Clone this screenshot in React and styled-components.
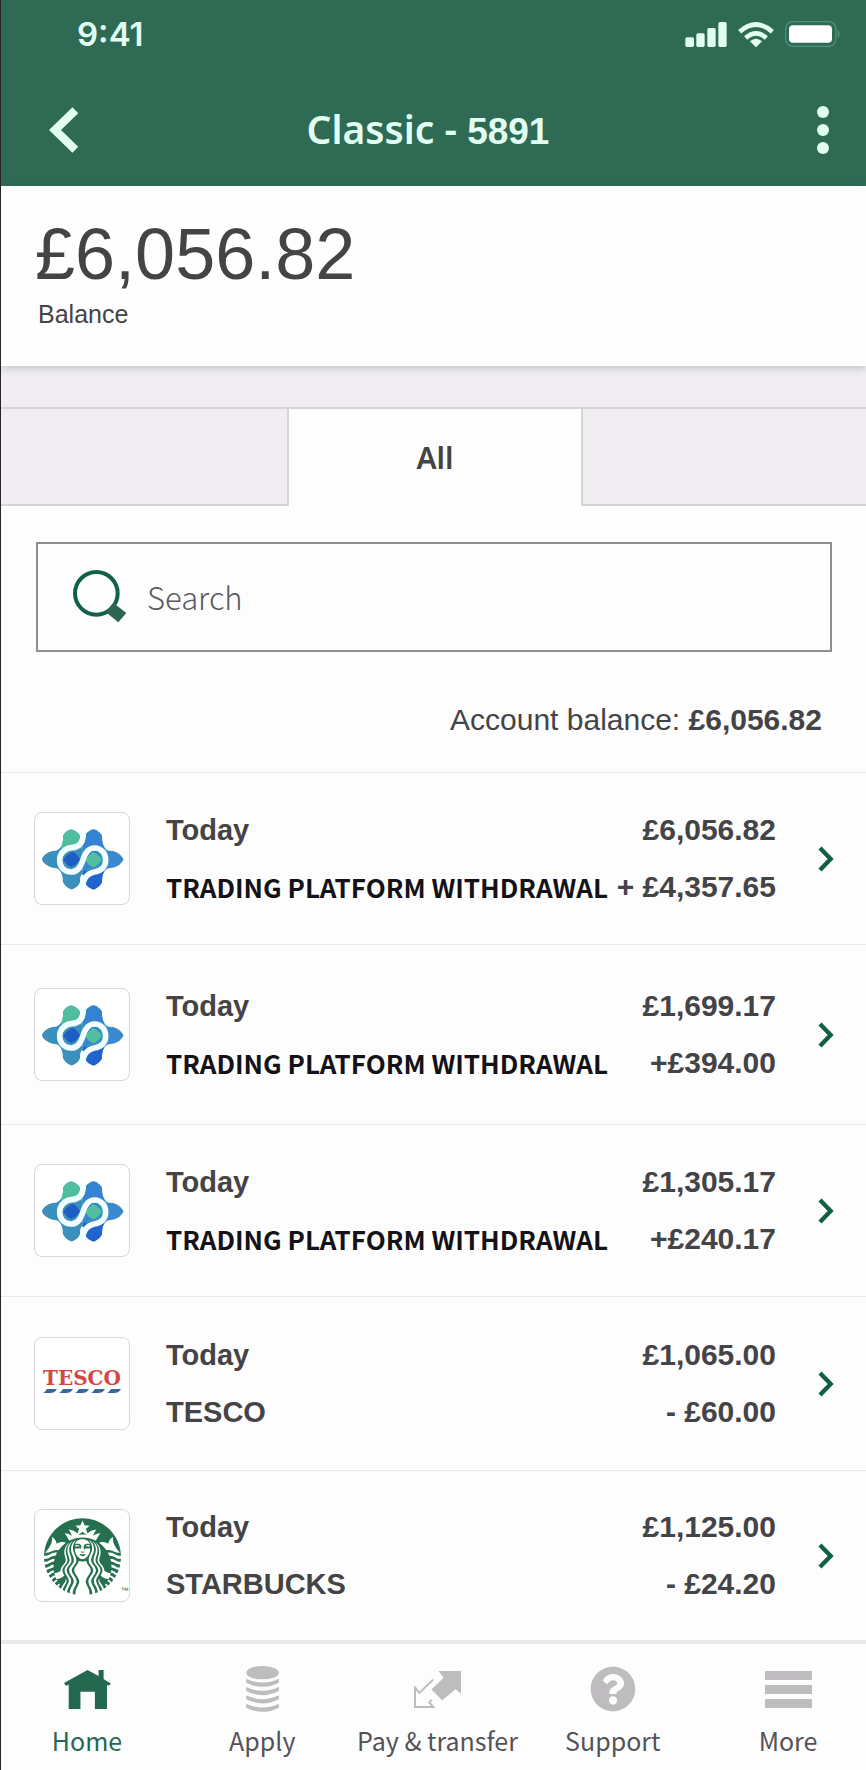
import React, { useState } from 'react';
import styled, { createGlobalStyle } from 'styled-components';
import { FaQuestionCircle } from 'react-icons/fa';
import { SiStarbucks } from 'react-icons/si';

const GlobalStyle = createGlobalStyle`
	:root {
		--green: #2f6a54;
		--darkGreen: #0f5f48;
		--mint: #e2fff3;
		--text: #444346;
		--line: #ebe9ec;
		--panel: #f0eef1;
		--humanist: 'Noto Sans CJK SC', 'Noto Sans', sans-serif;
	}
	* {
		box-sizing: border-box;
	}
	body {
		margin: 0;
		background: #fdfdfe;
		color: var(--text);
		font-family: 'Liberation Sans', Arial, sans-serif;
	}
	button {
		border: none;
		padding: 0;
		background: none;
		color: inherit;
		font-family: inherit;
		cursor: pointer;
	}
	svg {
		display: block;
		flex: none;
	}
`

const Page = styled.div`
	display: flex;
	flex-direction: column;
	min-height: 100vh;
	border-left: 1px solid #26242a;
`

const Header = styled.header`
	padding: 16px 24px 24px 48px;
	background: var(--green);
	color: var(--mint);
`

const StatusBar = styled.div`
	display: flex;
	align-items: center;
	justify-content: space-between;
	height: 36px;
	padding-left: 28px;
`

const Time = styled.span`
	font: 600 33px/36px Inter, sans-serif;
`

const StatusIcons = styled.div`
	display: flex;
	align-items: center;
	gap: 11px;
`

const TitleBar = styled.div`
	display: flex;
	align-items: center;
	margin-top: 46px;
	height: 64px;
	padding-right: 13px;
`

const Title = styled.h1`
	flex: 1;
	margin: 0;
	padding-right: 40px;
	text-align: center;
	font: 600 39px/64px 'Noto Sans', sans-serif;
`

const AccountNumber = styled.span`
	font: 700 37px/64px 'Liberation Sans', Arial, sans-serif;
`

const BalancePanel = styled.section`
	position: relative;
	padding: 28px 34px 36px;
	background: #fefefe;
	box-shadow: 0 2px 8px rgba(60, 55, 65, .25);
`

const BigAmount = styled.p`
	margin: 0;
	font-size: 72px;
	line-height: 80px;
	color: #424446;
`

const BalanceLabel = styled.p`
	margin: 4px 0 0 3px;
	font-size: 25px;
	line-height: 32px;
`

const Tabs = styled.div`
	display: grid;
	grid-template-columns: 288fr 292fr 285fr;
	padding-top: 41px;
	background: var(--panel);
`

const Tab = styled.button`
	height: 99px;
	padding-top: 2px;
	border-top: 2px solid #d6d4d8;
	border-bottom: 2px solid ${props => props.$active ? '#fdfdfe' : '#d6d4d8'};
	border-left: ${props => props.$after ? '2px solid #d6d4d8' : 'none'};
	border-right: ${props => props.$before ? '2px solid #d6d4d8' : 'none'};
	background: ${props => props.$active ? '#fdfdfe' : 'var(--panel)'};
	font: 600 30px/40px 'Noto Sans', sans-serif;
`

const SearchBox = styled.label`
	display: flex;
	align-items: center;
	gap: 20px;
	height: 110px;
	margin: 36px 34px 0 35px;
	padding: 0 34px 0 35px;
	border: 2px solid #918d92;
`

const SearchInput = styled.input`
	flex: 1;
	min-width: 0;
	padding: 0;
	border: none;
	outline: none;
	background: none;
	color: var(--text);
	font: 300 31px/44px var(--humanist);
	&::placeholder {
		color: #5c585e;
		opacity: 1;
	}
`

const AccountBalance = styled.p`
	margin: 0;
	padding: 50px 44px 34px;
	text-align: right;
	font-size: 30px;
	line-height: 36px;
`

const Transactions = styled.ul`
	margin: 0;
	padding: 0;
	list-style: none;
`

const Transaction = styled.a`
	display: flex;
	align-items: center;
	padding: ${props => props.$pad}px 32px ${props => props.$pad}px 33px;
	border-top: 1px solid var(--line);
	color: var(--text);
	text-decoration: none;
`

const LogoFrame = styled.div`
	flex: none;
	width: 96px;
	height: 93px;
	margin-right: 36px;
	border: 1px solid #d9d6db;
	border-radius: 8px;
	background: #fff;
`

const Lines = styled.div`
	display: flex;
	flex-direction: column;
	gap: 21px;
	flex: ${props => props.$amounts ? 'none' : 1};
	align-items: ${props => props.$amounts ? 'flex-end' : 'flex-start'};
	margin-right: ${props => props.$amounts ? 42 : 0}px;
	font-size: ${props => props.$amounts ? 30 : 29}px;
	font-weight: 700;
	line-height: 36px;
	white-space: nowrap;
`

const Platform = styled.span`
	color: #141216;
	font-family: var(--humanist);
	font-size: 26px;
`

const BottomNav = styled.nav`
	display: flex;
	justify-content: space-between;
	margin-top: auto;
	padding: 22px 8px 10px 16px;
	border-top: 4px solid #eae8eb;
`

const NavItem = styled.a`
	display: flex;
	flex-direction: column;
	align-items: center;
	width: 140px;
	color: ${props => props.$active ? '#24694f' : '#bfbcc0'};
	text-decoration: none;
`

const NavIcon = styled.span`
	display: flex;
	align-items: center;
	height: 46px;
`

const NavLabel = styled.span`
	margin-top: 8px;
	color: ${props => props.$active ? '#24694f' : '#555257'};
	font: 400 25px/40px var(--humanist);
	white-space: nowrap;
`

const SignalIcon = () => (
	<svg width="42" height="25" viewBox="0 0 124 75" fill="currentColor">
		<rect x="0" y="46" width="26" height="29" rx="5" />
		<rect x="33" y="34" width="25" height="41" rx="5" />
		<rect x="66" y="18" width="25" height="57" rx="5" />
		<rect x="99" y="0" width="25" height="75" rx="5" />
	</svg>
)

const WifiIcon = () => (
	<svg width="36" height="25" viewBox="0 0 108 75">
		<g fill="none" stroke="currentColor" strokeWidth="14">
			<path d="M5 29 Q54 -14 103 29" />
			<path d="M23 48 Q54 20 85 48" />
		</g>
		<path fill="currentColor" d="M36 58 Q54 43 72 58 L54 76z" />
	</svg>
)

const BatteryIcon = () => (
	<svg width="57" height="26" viewBox="0 0 171 78">
		<rect x="2" y="2" width="151" height="74" rx="22" fill="none" stroke="#4d9277" strokeWidth="4" />
		<rect x="12" y="13" width="129" height="52" rx="12" fill="#fff" />
		<path d="M158 27 Q171 39 158 51z" fill="#4d9277" />
	</svg>
)

const BackIcon = () => (
	<svg width="30" height="48" viewBox="0 0 90 144">
		<path d="M79 13 L18 72 L79 131" fill="none" stroke="currentColor" strokeWidth="25" />
	</svg>
)

const DotsIcon = () => (
	<svg width="12" height="48" viewBox="0 0 12 48" fill="currentColor">
		<circle cx="6" cy="6" r="6" />
		<circle cx="6" cy="24" r="6" />
		<circle cx="6" cy="42" r="6" />
	</svg>
)

const SearchIcon = () => (
	<svg width="54" height="54" viewBox="0 0 162 162">
		<circle cx="70" cy="70" r="64" fill="none" stroke="#11604a" strokeWidth="12" />
		<path d="M121 98 L160 129 L136 157 L98 126z" fill="#2c6650" />
	</svg>
)

const Chevron = () => (
	<svg width="16" height="26" viewBox="0 0 48 78">
		<path d="M6 6 L38 39 L6 72" fill="none" stroke="#0f5f48" strokeWidth="13" />
	</svg>
)

// six petals cut by a white S-shaped ribbon
const PlatformLogo = ({ id }) => (
	<svg width="94" height="91" viewBox="0 0 282 273">
		<clipPath id={id}>
			<path d="M108 49 Q116 50 128 59 Q138 67 135 80 Q134 94 142 94 Q151 94 149 78 Q146 66 158 58 Q170 49 177 49 Q192 54 201 68 Q200 98 214 110 Q222 115 234 114 Q256 120 266 139 Q256 160 234 164 Q222 163 212 170 Q200 182 201 208 Q194 222 177 230 Q158 226 149 208 Q149 184 142 184 Q135 184 135 208 Q128 224 110 230 Q92 224 84 208 Q84 182 72 170 Q64 163 52 164 Q28 158 20 139 Q28 120 52 114 Q64 115 72 108 Q86 98 84 68 Q92 54 108 49z" />
		</clipPath>
		<g clipPath={'url(#' + id + ')'}>
			<rect width="143" height="273" fill="#3a90bb" />
			<rect x="143" width="139" height="273" fill="#3a88cd" />
			<path d="M60 40 H143 V106 H76z" fill="#50bd9f" />
			<path d="M143 40 H210 V112 L143 130z" fill="#3581d2" />
			<path d="M143 174 H210 V240 H143z" fill="#2164ce" />
		</g>
		<path d="M112 116 Q128 122 135 140 Q122 156 110 162 Q96 158 85 140 Q96 122 112 116z" fill="#1e5dc4" />
		<path d="M175 118 Q190 124 201 140 Q190 157 175 163 Q160 158 152 142 Q162 122 175 118z" fill="#52c09c" />
		<path
			d="M145 52 C147 92 130 103 110 104 C88 106 74 122 74 141 C74 162 88 177 108 177 C130 177 138 158 144 141 C150 120 158 105 178 105 C198 105 212 120 212 141 C212 162 198 174 178 177 C156 181 142 196 142 232"
			fill="none" stroke="#f2ffff" strokeWidth="17"
		/>
	</svg>
)

const TescoLogo = () => (
	<svg width="94" height="91" viewBox="0 0 94 91">
		<text x="47" y="47" textAnchor="middle" fill="#d34845" fontFamily="DejaVu Serif, serif" fontWeight="700" fontSize="20">TESCO</text>
		<g fill="#38699c">
			{[0, 1, 2, 3, 4].map(i => (
				<path key={i} d="M12 51 H22 Q20 55 15 55 H8 Q10 54 12 51z" transform={'translate(' + (i * 16) + ' 0)'} />
			))}
		</g>
	</svg>
)

const CoffeeFrame = styled.div`
	display: flex;
	align-items: flex-end;
	justify-content: center;
	height: 91px;
	padding: 0 0 6px 8px;
	color: #25704f;
	font-size: 8px;
	line-height: 8px;
`

const CoffeeLogo = () => (
	<CoffeeFrame><SiStarbucks size={77} />™</CoffeeFrame>
)

const HomeIcon = () => (
	<svg width="47" height="39" viewBox="0 0 140 116" fill="currentColor">
		<path d="M0 39 L70 0 L103 18 V0 H118 V27 L140 41 L133 47 L128 44 V116 H92 V65 H49 V116 H14 V44 L6 47z" />
	</svg>
)

const CoinsIcon = () => (
	<svg width="33" height="46" viewBox="0 0 98 138" fill="currentColor">
		<ellipse cx="49" cy="20" rx="49" ry="20" />
		{[38, 63, 88, 113].map(y => (
			<path key={y} d={'M0 ' + y + ' Q49 ' + (y + 23) + ' 98 ' + y + ' V' + (y + 12) + ' Q49 ' + (y + 37) + ' 0 ' + (y + 12) + 'z'} />
		))}
	</svg>
)

const TransferIcon = () => (
	<svg width="47" height="37" viewBox="0 0 140 110">
		<path d="M73 0 H140 V68 L124 54 L84 87 L52 55 L88 20z" fill="currentColor" />
		<path d="M57 25 L16 65 L3 50 V107 H58 L46 94 L52 86" fill="none" stroke="currentColor" strokeWidth="6" />
	</svg>
)

const BarsIcon = () => (
	<svg width="47" height="37" viewBox="0 0 47 37" fill="currentColor">
		<rect width="47" height="9" />
		<rect y="14" width="47" height="9" />
		<rect y="28" width="47" height="9" />
	</svg>
)

const transactions = [
	{ logo: PlatformLogo, name: 'TRADING PLATFORM WITHDRAWAL', platform: true, balance: '£6,056.82', amount: '+ £4,357.65', pad: 39 },
	{ logo: PlatformLogo, name: 'TRADING PLATFORM WITHDRAWAL', platform: true, balance: '£1,699.17', amount: '+£394.00', pad: 43 },
	{ logo: PlatformLogo, name: 'TRADING PLATFORM WITHDRAWAL', platform: true, balance: '£1,305.17', amount: '+£240.17', pad: 39 },
	{ logo: TescoLogo, name: 'TESCO', balance: '£1,065.00', amount: '- £60.00', pad: 40 },
	{ logo: CoffeeLogo, name: 'STARBUCKS', balance: '£1,125.00', amount: '- £24.20', pad: 38 },
]

const navItems = [
	{ label: 'Home', icon: <HomeIcon />, active: true },
	{ label: 'Apply', icon: <CoinsIcon /> },
	{ label: 'Pay & transfer', icon: <TransferIcon /> },
	{ label: 'Support', icon: <FaQuestionCircle size={46} /> },
	{ label: 'More', icon: <BarsIcon /> },
]

const App = () => {
	const [search, setSearch] = useState('');

	return (
		<>
			<GlobalStyle />
			<Page>
				<Header>
					<StatusBar>
						<Time>9:41</Time>
						<StatusIcons>
							<SignalIcon />
							<WifiIcon />
							<BatteryIcon />
						</StatusIcons>
					</StatusBar>
					<TitleBar>
						<button aria-label="Back"><BackIcon /></button>
						<Title>Classic - <AccountNumber>5891</AccountNumber></Title>
						<button aria-label="Options"><DotsIcon /></button>
					</TitleBar>
				</Header>
				<BalancePanel>
					<BigAmount>£6,056.82</BigAmount>
					<BalanceLabel>Balance</BalanceLabel>
				</BalancePanel>
				<Tabs role="tablist">
					<Tab role="tab" aria-label="Previous" $before />
					<Tab role="tab" aria-selected="true" $active>All</Tab>
					<Tab role="tab" aria-label="Next" $after />
				</Tabs>
				<SearchBox>
					<SearchIcon />
					<SearchInput
						type="text"
						aria-label="Search"
						placeholder="Search"
						value={search}
						onChange={e => setSearch(e.target.value)}
					/>
				</SearchBox>
				<AccountBalance>Account balance: <b>£6,056.82</b></AccountBalance>
				<Transactions>
					{transactions.map((item, index) => (
						<li key={index}>
							<Transaction href="#" $pad={item.pad}>
								<LogoFrame><item.logo id={'logo' + index} /></LogoFrame>
								<Lines>
									<span>Today</span>
									{item.platform ? <Platform>{item.name}</Platform> : <span>{item.name}</span>}
								</Lines>
								<Lines $amounts>
									<span>{item.balance}</span>
									<span>{item.amount}</span>
								</Lines>
								<Chevron />
							</Transaction>
						</li>
					))}
				</Transactions>
				<BottomNav>
					{navItems.map(item => (
						<NavItem key={item.label} href="#" $active={item.active}>
							<NavIcon>{item.icon}</NavIcon>
							<NavLabel $active={item.active}>{item.label}</NavLabel>
						</NavItem>
					))}
				</BottomNav>
			</Page>
		</>
	);
}

export default App;
